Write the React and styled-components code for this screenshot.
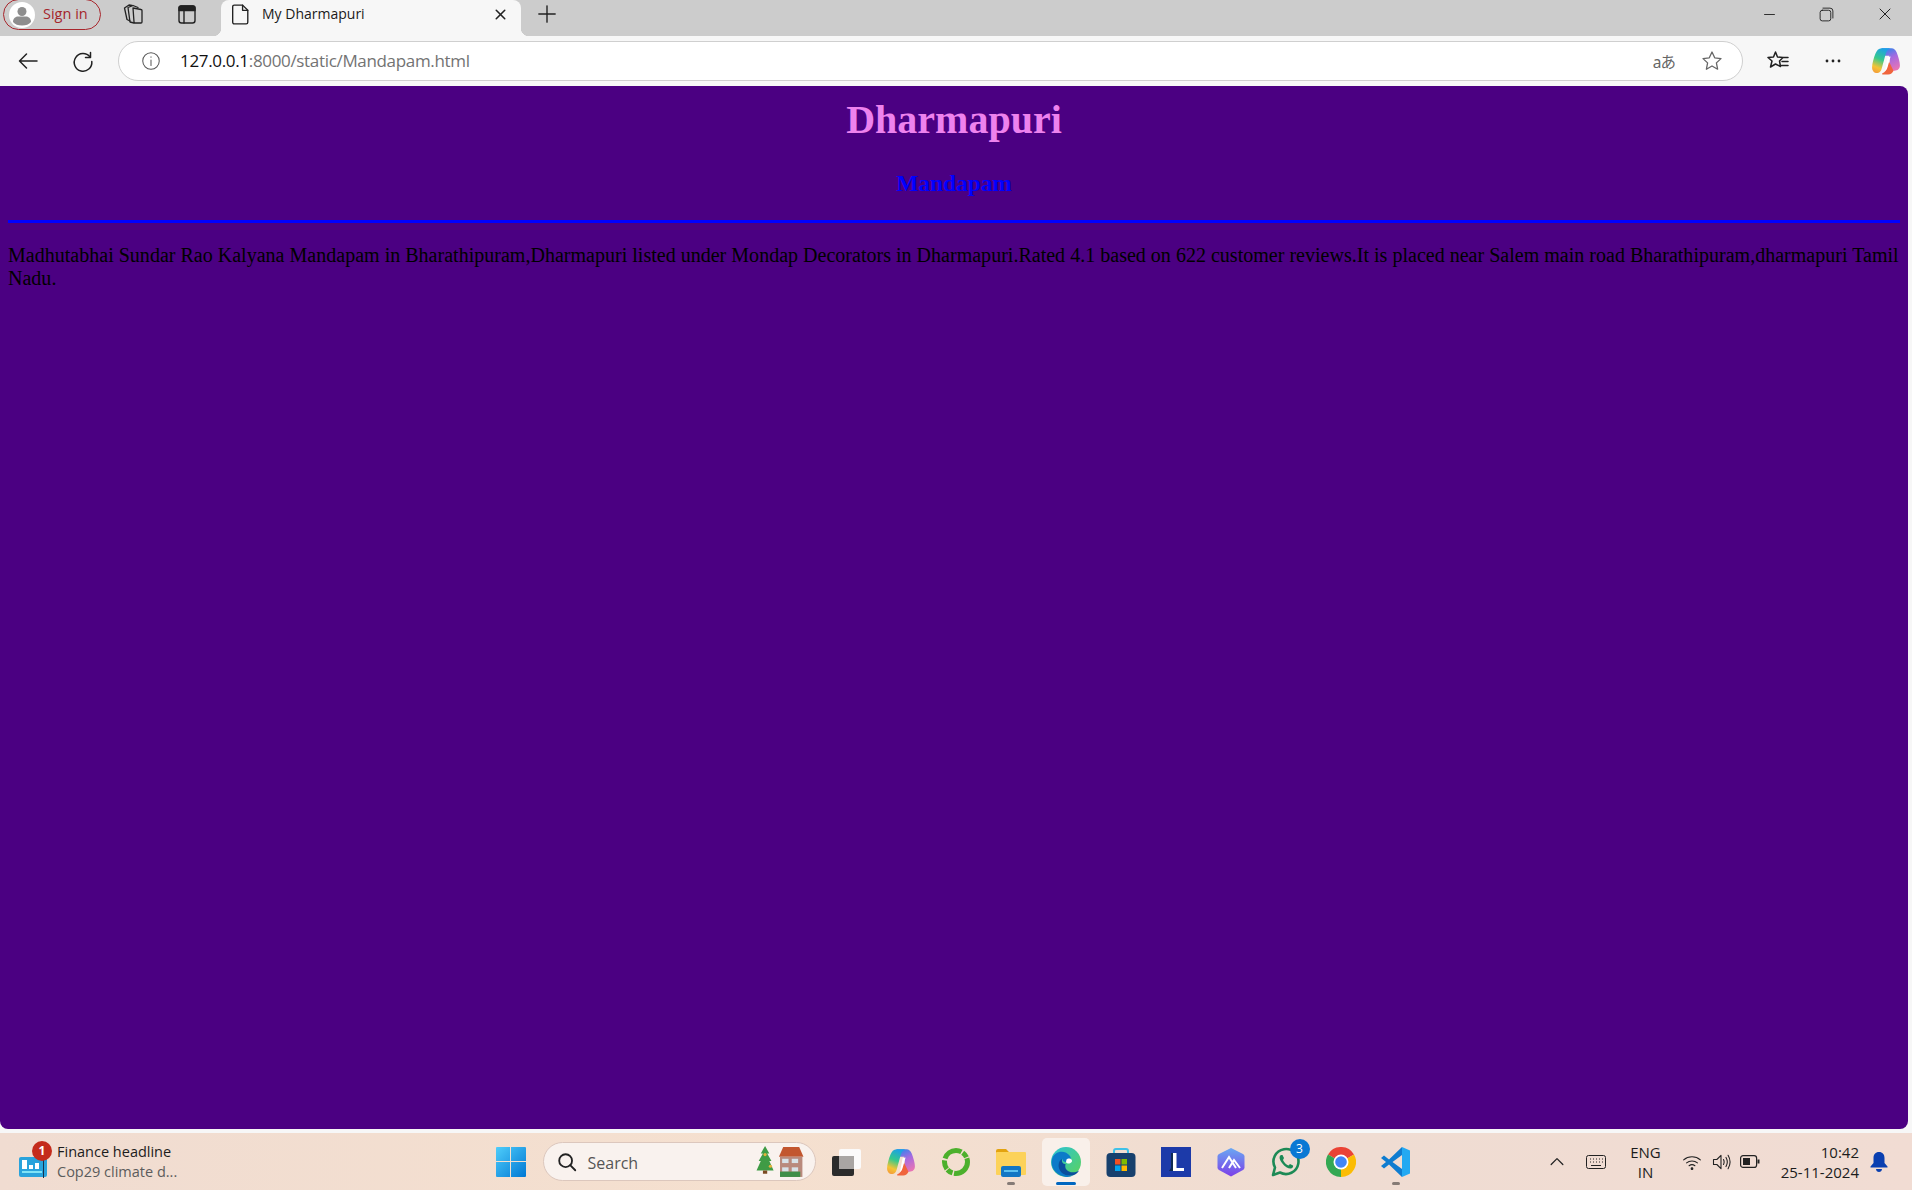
import styled, { createGlobalStyle } from 'styled-components';
import { FiX, FiPlus, FiMinus } from 'react-icons/fi';

const GlobalStyle = createGlobalStyle`
  html, body { margin: 0; padding: 0; height: 100%; overflow: hidden; }
  #root { height: 100%; }
  * { box-sizing: border-box; }
`;

const uiFont = `"Open Sans", "Noto Sans", "Liberation Sans", sans-serif`;

const Screen = styled.div`
  width: 1912px;
  height: 1190px;
  display: flex;
  flex-direction: column;
  background: #f7f7f7;
  font-family: ${uiFont};
  overflow: hidden;
`;

/* ---- tab strip ---- */
const TabStrip = styled.div`
  height: 36px;
  flex: none;
  display: flex;
  align-items: flex-start;
  background: #cccccc;
  padding-left: 3px;
`;
const SignIn = styled.div`
  width: 98px;
  height: 31px;
  margin-top: -1px;
  display: flex;
  align-items: center;
  gap: 8px;
  padding-left: 5px;
  border: 1px solid #a8262c;
  border-radius: 16px;
  color: #a4262c;
  font-size: 14.5px;
  span { margin-top: -2px; }
`;
const Avatar = styled.svg`
  width: 26px;
  height: 26px;
  flex: none;
`;
const StripButton = styled.div`
  width: 24px;
  height: 28px;
  display: flex;
  align-items: center;
  justify-content: center;
  margin-left: ${(p) => p.$left}px;
`;
const Tab = styled.div`
  width: 300px;
  height: 36px;
  margin-left: 22px;
  padding: 0 12px 8px 7px;
  display: flex;
  align-items: center;
  background: #f7f7f7;
  border-radius: 8px 8px 0 0;
  position: relative;
  color: #1a1a1a;
  font-size: 14px;
  &::after {
    content: '';
    position: absolute;
    right: -8px;
    bottom: 0;
    width: 8px;
    height: 8px;
    background: radial-gradient(circle at 100% 0, #cccccc 8px, #f7f7f7 8.5px);
  }
  &::before {
    content: '';
    position: absolute;
    left: -8px;
    bottom: 0;
    width: 8px;
    height: 8px;
    background: radial-gradient(circle at 0 0, #cccccc 8px, #f7f7f7 8.5px);
  }
`;
const TabTitle = styled.span`
  flex: 1;
  margin: -2px 0 0 9px;
`;
const NewTab = styled.div`
  height: 28px;
  margin-left: 12px;
  display: flex;
  align-items: center;
  color: #222;
`;
const WindowButtons = styled.div`
  height: 28px;
  margin-left: auto;
  margin-right: 17px;
  display: flex;
  align-items: center;
  gap: 40px;
  color: #222;
`;

/* ---- toolbar ---- */
const Toolbar = styled.div`
  height: 50px;
  flex: none;
  display: flex;
  align-items: center;
  padding-left: 16px;
`;
const NavButton = styled.div`
  width: 24px;
  display: flex;
  justify-content: center;
  margin-right: ${(p) => p.$right || 0}px;
`;
const AddressBar = styled.div`
  width: 1625px;
  height: 40px;
  display: flex;
  align-items: center;
  padding: 0 18px 0 21px;
  background: #fff;
  border: 1px solid #cfcfcf;
  border-radius: 20px;
  margin-right: 23px;
`;
const Url = styled.div`
  margin: -2px 0 0 18px;
  flex: 1;
  font-size: 17px;
  letter-spacing: -0.33px;
  color: #111;
  span { color: #737373; }
`;
const ToolIcons = styled.div`
  display: flex;
  align-items: center;
  gap: 25px;
`;
const TranslateGlyph = styled.span`
  font-family: "Noto Sans", "Noto Sans CJK JP", sans-serif;
  font-size: 15.5px;
  letter-spacing: -1px;
  color: #666;
`;
const EndIcons = styled.div`
  display: flex;
  align-items: center;
  gap: 31px;
`;
const ToolbarCopilot = styled.div`
  display: flex;
  margin-left: -5px;
`;

/* ---- web page ---- */
const Page = styled.main`
  width: 1908px;
  height: 1043px;
  flex: none;
  padding: 11px 8px 0;
  background: #4b0082;
  border-radius: 0 8px 8px 8px;
  font-family: "Liberation Serif", serif;
  color: #000;
`;
const Title = styled.h1`
  margin: 0;
  font-size: 40px;
  line-height: 46px;
  font-weight: 700;
  text-align: center;
  color: violet;
`;
const Subtitle = styled.h2`
  margin: 27px 0 0;
  font-size: 23.4px;
  line-height: 27px;
  font-weight: 700;
  text-align: center;
  color: #0000ff;
`;
const Rule = styled.hr`
  margin: 23px 0 0;
  border: 0;
  height: 3px;
  background: #0000ff;
`;
const Body = styled.p`
  margin: 21px 0 0;
  font-size: 20px;
  line-height: 23px;
  letter-spacing: 0.016px;
`;

/* ---- taskbar ---- */
const Taskbar = styled.footer`
  height: 57px;
  margin-top: 4px;
  flex: none;
  display: grid;
  grid-template-columns: 1fr auto 1fr;
  align-items: center;
  background: linear-gradient(90deg, #f0dcd1 0%, #f5e0cf 40%, #efdcd2 70%, #f1dcd3 100%);
  color: #1c1c1c;
`;
const Widget = styled.div`
  display: flex;
  align-items: center;
  padding-left: 19px;
  gap: 0;
`;
const WidgetIcon = styled.div`
  position: relative;
  width: 38px;
  height: 32px;
  flex: none;
`;
const RedBadge = styled.span`
  position: absolute;
  top: -5px;
  left: 13px;
  width: 20px;
  height: 20px;
  border-radius: 50%;
  background: #c42b1c;
  color: #fff;
  font-size: 12px;
  font-weight: 700;
  display: flex;
  align-items: center;
  justify-content: center;
`;
const WidgetText = styled.div`
  margin-top: 1px;
  font-size: 14.5px;
  line-height: 20px;
  small { display: block; font-size: 14.5px; color: #5c5c5c; }
`;
const Center = styled.div`
  display: flex;
  align-items: center;
  margin-left: -5px;
`;
const Slot = styled.div`
  position: relative;
  width: 55px;
  height: 48px;
  display: flex;
  align-items: center;
  justify-content: center;
  ${(p) => p.$active && `
    &::before {
      content: '';
      position: absolute;
      left: 3px; right: 4px; top: 0; bottom: 0;
      background: #f9f0ea;
      border-radius: 5px;
    }
  `}
  & > svg { position: relative; }
`;
const Dot = styled.span`
  position: absolute;
  bottom: 1px;
  left: 50%;
  transform: translateX(-50%);
  width: ${(p) => (p.$blue ? 20 : 8)}px;
  height: 3px;
  border-radius: 2px;
  background: ${(p) => (p.$blue ? '#0067c0' : '#857b76')};
`;
const BlueBadge = styled.span`
  position: absolute;
  top: 1px;
  right: 4px;
  width: 20px;
  height: 20px;
  border-radius: 50%;
  background: #0a78d4;
  color: #fff;
  font-size: 12px;
  display: flex;
  align-items: center;
  justify-content: center;
`;
const SearchBox = styled.div`
  width: 273px;
  height: 39px;
  margin: 0 3px 0 4px;
  display: flex;
  align-items: center;
  padding: 0 10px 0 12px;
  background: #f9f2ee;
  border: 1px solid #dcc7bd;
  border-radius: 20px;
  font-size: 16px;
  color: #555;
`;
const SearchLabel = styled.span`
  flex: 1;
  margin: 2px 0 0 10px;
`;
const Tray = styled.div`
  display: flex;
  align-items: center;
  justify-content: flex-end;
  padding-right: 24px;
  font-size: 15px;
`;
const Lang = styled.div`
  text-align: center;
  line-height: 20px;
  margin: 0 21px 0 24px;
`;
const TrayIcons = styled.div`
  display: flex;
  align-items: center;
  gap: 9px;
`;
const Clock = styled.div`
  text-align: right;
  line-height: 20px;
  margin: 0 11px 0 21px;
`;

/* ---- drawn icons ---- */
const Stroke = ({ size = 24, w = 1.6, color = '#222', children }) => (
  <svg width={size} height={size} viewBox="0 0 24 24" fill="none" stroke={color} strokeWidth={w} strokeLinecap="round" strokeLinejoin="round">
    {children}
  </svg>
);

const CopilotIcon = ({ size = 28, id = 'a' }) => (
  <svg width={size} height={size} viewBox="0 0 28 28">
    <defs>
      <linearGradient id={`cpL${id}`} x1="0.6" y1="0" x2="0.3" y2="1">
        <stop offset="0" stopColor="#1c9fe8" />
        <stop offset="0.45" stopColor="#35c98c" />
        <stop offset="0.8" stopColor="#f6c333" />
        <stop offset="1" stopColor="#f3a13a" />
      </linearGradient>
      <linearGradient id={`cpR${id}`} x1="0.3" y1="0" x2="0.7" y2="1">
        <stop offset="0" stopColor="#2f86ec" />
        <stop offset="0.45" stopColor="#a66ae0" />
        <stop offset="1" stopColor="#e874b4" />
      </linearGradient>
    </defs>
    <path d="M10 2h9c2.500 0 4 1.500 5 4 1.500 4 3 9 3 12 0 3.500-2.200 5-5 5h-4L17 9H9z" fill={`url(#cpR${id})`} />
    <path d="M10 2h8c-2.500 1-3.600 3-4.300 5.500L10 21c-.6 2.200-1.700 3.800-3.700 4.200C3 25.500 1 23 1 20c0-3.500 1.500-8.500 3-12.500C5.300 4 7 2 10 2z" fill={`url(#cpL${id})`} />
    <path d="M10.500 25.500c2.500-.7 3.500-2.700 4.100-4.700L16.500 14l4.500 9c-1 2-2.500 3.500-5 3.500h-5.500z" fill="#f0643c" />
    <path d="M15.500 10.500l2.800-.8-2.800 10c-.5 1.800-1.200 3-2.500 3.800z" fill="#fff" />
  </svg>
);

const WindowsIcon = () => (
  <svg width="30" height="30" viewBox="0 0 30 30">
    <defs>
      <linearGradient id="winA" x1="0" y1="0" x2="1" y2="1">
        <stop offset="0" stopColor="#4fcdfa" />
        <stop offset="1" stopColor="#0078d4" />
      </linearGradient>
    </defs>
    <path d="M0 1a1 1 0 0 1 1-1h13v14H0zM15 0h14a1 1 0 0 1 1 1v13H15zM0 15h14v15H1a1 1 0 0 1-1-1zM15 15h15v14a1 1 0 0 1-1 1H15z" fill="url(#winA)" />
  </svg>
);

const EdgeIcon = () => (
  <svg width="30" height="30" viewBox="0 0 30 30">
    <defs>
      <linearGradient id="edA" x1="0" y1="0" x2="1" y2="1">
        <stop offset="0" stopColor="#2bc3d8" />
        <stop offset="1" stopColor="#5cd35a" />
      </linearGradient>
    </defs>
    <circle cx="15" cy="15" r="15" fill="url(#edA)" />
    <path d="M1 12C3 4 14 2 19 9c2 3 0 6-4 6 -2 0-4-1-3-3-4 2-5 9 1 14 3 2.500 7 3 10 2-3 1.800-6 2.200-9 1.700C5 28 -1 21 1 12z" fill="#0c7bc9" />
    <path d="M11 12c-4 2-5 9 0 14 3 2.500 8 3 12 2 2-1 4-2.500 5-4.500-3 2-7 2.500-10 1-4-2-4-5-3.500-7.500-2 0-4-1-3.500-5z" fill="#0b4f9c" />
    <path d="M15.500 12.500c1-1.500 4-1.500 5 0s.5 2.500-1 3.500c-2 1-4 .5-4.500-1z" fill="#fff" />
  </svg>
);

const StoreIcon = () => (
  <svg width="30" height="30" viewBox="0 0 30 30">
    <path d="M8 8V4a2 2 0 0 1 2-2h10a2 2 0 0 1 2 2v4" fill="none" stroke="#3fc1e8" strokeWidth="2" />
    <rect x="0.500" y="6" width="29" height="24" rx="4" fill="#17406d" />
    <rect x="9" y="12" width="5.500" height="5.500" fill="#f25022" />
    <rect x="15.500" y="12" width="5.500" height="5.500" fill="#7fba00" />
    <rect x="9" y="18.500" width="5.500" height="5.500" fill="#00a4ef" />
    <rect x="15.500" y="18.500" width="5.500" height="5.500" fill="#ffb900" />
  </svg>
);

const LIcon = () => (
  <svg width="30" height="30" viewBox="0 0 30 30">
    <rect width="30" height="30" fill="#1c3aa9" />
    <path d="M10 6h4v15h8v3H8l2-3z" fill="#0d2a52" />
    <path d="M12 6h3.500v15H23v3H12z" fill="#fff" />
  </svg>
);

const ArcIcon = () => (
  <svg width="30" height="30" viewBox="0 0 30 30">
    <defs>
      <linearGradient id="arA" x1="0" y1="0" x2="0" y2="1">
        <stop offset="0" stopColor="#6aa8f2" />
        <stop offset="1" stopColor="#7c3fe8" />
      </linearGradient>
    </defs>
    <path d="M15 1l12 6a3 3 0 0 1 1.500 2.500v11A3 3 0 0 1 27 23l-12 6.500L3 23a3 3 0 0 1-1.500-2.500v-11A3 3 0 0 1 3 7z" fill="url(#arA)" />
    <path d="M6 21l7-11 7 11M13 21l5-8 6 8" fill="none" stroke="#fff" strokeWidth="2" />
  </svg>
);

const WhatsAppIcon = () => (
  <svg width="30" height="30" viewBox="0 0 30 30">
    <path d="M2 28l2-7.500A12.500 12.500 0 1 1 9 25.500z" fill="none" stroke="#1d8a56" strokeWidth="2.600" strokeLinejoin="round" />
    <path d="M10 8c-2 1-2 4 1 8s7 6 9 5.500 2.500-2.500 2-3l-3-1.500-1.500 1.500c-2-.5-4.500-3-5.500-5.500L13 11l-1.500-3z" fill="#1d8a56" />
  </svg>
);

const ChromeIcon = () => (
  <svg width="30" height="30" viewBox="0 0 30 30">
    <path d="M15 15L2 7.500A15 15 0 0 1 28 7.500z" fill="#ea4335" />
    <path d="M15 15L28 7.500A15 15 0 0 1 15 30z" fill="#fbbc04" />
    <path d="M15 15L15 30A15 15 0 0 1 2 7.500z" fill="#34a853" />
    <circle cx="15" cy="15" r="7.500" fill="#fff" />
    <circle cx="15" cy="15" r="5.800" fill="#4285f4" />
  </svg>
);

const VsCodeIcon = () => (
  <svg width="30" height="30" viewBox="0 0 30 30">
    <path d="M21 0l8 3.500v23L21 30z" fill="#23a9f2" />
    <path d="M21 0L8 12.500 3 8.500 0 11l5 4-5 4 3 2.500 5-4L21 30v-8l-9.500-7L21 8z" fill="#0e7cd0" />
  </svg>
);

const FolderIcon = () => (
  <svg width="30" height="30" viewBox="0 0 30 30">
    <path d="M0 4a2 2 0 0 1 2-2h8l3 3h15v4H0z" fill="#e3a30f" />
    <rect y="5" width="30" height="23" rx="1" fill="#fcd25a" />
    <rect x="5" y="19" width="20" height="11" rx="2" fill="#1276c4" />
    <rect x="8" y="23" width="14" height="2" fill="#5cc0f0" />
  </svg>
);

const RingIcon = () => (
  <svg width="30" height="30" viewBox="0 0 30 30">
    <circle cx="15" cy="15" r="11.500" fill="none" stroke="#4cb02c" strokeWidth="5" strokeDasharray="20 1.500 6 1 9 2" />
  </svg>
);

const TaskViewIcon = () => (
  <svg width="30" height="30" viewBox="0 0 30 30">
    <rect x="8" y="2" width="22" height="20" rx="2" fill="#fbfafa" />
    <rect x="1" y="9" width="22" height="20" rx="2" fill="#2b2b2b" />
    <rect x="8" y="9" width="15" height="13" fill="#a9a5a3" />
  </svg>
);

const SceneryIcon = () => (
  <svg width="50" height="32" viewBox="0 0 46 30">
    <path d="M9 0l4 7h-2l4 7h-2l4 9H1l4-9H3l4-7H5z" fill="#3f9b45" />
    <rect x="7" y="23" width="4" height="3" fill="#7b4a21" />
    <circle cx="9" cy="8" r="1.500" fill="#e5b23a" />
    <circle cx="14" cy="19" r="1.500" fill="#e5b23a" />
    <path d="M22 10l4-9h15l4 9z" fill="#c2562f" />
    <rect x="23" y="10" width="21" height="19" fill="#b98a7d" />
    <rect x="25" y="12" width="6" height="4" fill="#d8e2e8" />
    <rect x="34" y="12" width="6" height="4" fill="#d8e2e8" />
    <rect x="25" y="20" width="6" height="4" fill="#d8e2e8" />
    <rect x="34" y="20" width="6" height="4" fill="#d8e2e8" />
    <rect x="23" y="24" width="19" height="5" fill="#3f8f48" />
  </svg>
);

const App = () => (
  <Screen>
    <GlobalStyle />
    <TabStrip>
      <SignIn>
        <Avatar viewBox="0 0 26 26">
          <circle cx="13" cy="13" r="13" fill="#fff" />
          <circle cx="13" cy="9.500" r="4.500" fill="#8e8e8e" />
          <path d="M4 20c0-4 3-5.500 5-5.500h8c2 0 5 1.500 5 5.500-2 2.500-5 3.500-9 3.500s-7-1-9-3.500z" fill="#8e8e8e" />
        </Avatar>
        <span>Sign in</span>
      </SignIn>
      <StripButton $left={21}>
        <Stroke size={26} w={1.300}>
          <path d="M11 6l8 1.500a1 1 0 0 1 1 1V20a1 1 0 0 1-1 1h-6a1 1 0 0 1-1-1z" />
          <path d="M12 21L8 20 6 5.500 11 3.500l5 2" />
          <path d="M8 19l-3-1.500L2.500 6 7 3l3 .5" />
        </Stroke>
      </StripButton>
      <StripButton $left={29}>
        <Stroke size={25} w={1.400}>
          <rect x="4" y="3.500" width="16" height="17" rx="2.500" />
          <path d="M4 5.500a2 2 0 0 1 2-2h12a2 2 0 0 1 2 2v2.500H4z" fill="#222" />
          <path d="M9 8v12.500" />
        </Stroke>
      </StripButton>
      <Tab>
        <Stroke size={25} w={1.300}>
          <path d="M6 3h8l5 5v11.500a1.500 1.500 0 0 1-1.500 1.500h-11.500A1.500 1.500 0 0 1 4.500 19.500V4.500A1.500 1.500 0 0 1 6 3z" />
          <path d="M14 3v5h5" />
        </Stroke>
        <TabTitle>My Dharmapuri</TabTitle>
        <FiX size={17} strokeWidth={2.200} color="#222" />
      </Tab>
      <NewTab>
        <FiPlus size={28} strokeWidth={1.200} />
      </NewTab>
      <WindowButtons>
        <FiMinus size={17} strokeWidth={1.300} />
        <Stroke size={17} w={1.300}>
          <rect x="3" y="6" width="15" height="15" rx="3" />
          <path d="M7 3h10a4 4 0 0 1 4 4v10" />
        </Stroke>
        <FiX size={20} strokeWidth={1.200} />
      </WindowButtons>
    </TabStrip>
    <Toolbar>
      <NavButton $right={31}>
        <Stroke size={26} w={1.500}>
          <path d="M21 12H3.500M10.500 5l-7 7 7 7" />
        </Stroke>
      </NavButton>
      <NavButton $right={23}>
        <Stroke size={25} w={1.500}>
          <path d="M19 7.500A8.800 8.800 0 1 0 20.800 12" />
          <path d="M19.500 3v5h-5" />
        </Stroke>
      </NavButton>
      <AddressBar>
        <Stroke size={22} w={1.100} color="#555">
          <circle cx="12" cy="12" r="9" />
          <path d="M12 11v6M12 7.500v.5" />
        </Stroke>
        <Url>127.0.0.1<span>:8000/static/Mandapam.html</span></Url>
        <ToolIcons>
          <TranslateGlyph>aあ</TranslateGlyph>
          <Stroke size={24} w={1.300} color="#666">
            <path d="M12 3l2.700 5.800 6.300.8-4.600 4.300 1.200 6.300L12 17l-5.600 3.200 1.200-6.300L3 9.600l6.300-.8z" />
          </Stroke>
        </ToolIcons>
      </AddressBar>
      <EndIcons>
        <Stroke size={24} w={1.500}>
          <path d="M9.500 3l2 5 5.500.5-3.500 3.500 1 5.500-5-2.500-5 3L6 12 2 8.500 7.500 8z" />
          <path d="M17.500 8.500H22M16 12.500h6M15.500 16.500H22" />
        </Stroke>
        <Stroke size={24} w={0}>
          <circle cx="6" cy="12" r="1.400" fill="#222" />
          <circle cx="12" cy="12" r="1.400" fill="#222" />
          <circle cx="18" cy="12" r="1.400" fill="#222" />
        </Stroke>
        <ToolbarCopilot>
          <CopilotIcon size={30} id="top" />
        </ToolbarCopilot>
      </EndIcons>
    </Toolbar>
    <Page>
      <Title>Dharmapuri</Title>
      <Subtitle>Mandapam</Subtitle>
      <Rule />
      <Body>
        Madhutabhai Sundar Rao Kalyana Mandapam in Bharathipuram,Dharmapuri listed under Mondap Decorators in Dharmapuri.Rated 4.1 based on 622 customer reviews.It is placed near Salem main road Bharathipuram,dharmapuri Tamil Nadu.
      </Body>
    </Page>
    <Taskbar>
      <Widget>
        <WidgetIcon>
          <svg width="28" height="21" viewBox="0 0 28 21" style={{ marginTop: 11 }}>
            <rect width="28" height="20" rx="2" fill="#29a3dc" />
            <rect x="3" y="3" width="5" height="9" fill="#fff" />
            <rect x="10" y="8" width="4" height="4" fill="#fff" />
            <rect x="16" y="6" width="4" height="6" fill="#fff" />
            <rect x="3" y="14" width="20" height="2" fill="#7fe3f7" />
            <rect x="24" y="3" width="1" height="18" fill="#17324d" />
          </svg>
          <RedBadge>1</RedBadge>
        </WidgetIcon>
        <WidgetText>
          Finance headline
          <small>Cop29 climate d...</small>
        </WidgetText>
      </Widget>
      <Center>
        <Slot><WindowsIcon /></Slot>
        <SearchBox>
          <Stroke size={22} w={2}>
            <circle cx="10.500" cy="10.500" r="7" />
            <path d="M15.500 15.500L21 21" />
          </Stroke>
          <SearchLabel>Search</SearchLabel>
          <SceneryIcon />
        </SearchBox>
        <Slot><TaskViewIcon /></Slot>
        <Slot><CopilotIcon size={30} id="bar" /></Slot>
        <Slot><RingIcon /></Slot>
        <Slot><FolderIcon /><Dot /></Slot>
        <Slot $active><EdgeIcon /><Dot $blue /></Slot>
        <Slot><StoreIcon /></Slot>
        <Slot><LIcon /></Slot>
        <Slot><ArcIcon /></Slot>
        <Slot><WhatsAppIcon /><BlueBadge>3</BlueBadge></Slot>
        <Slot><ChromeIcon /></Slot>
        <Slot><VsCodeIcon /><Dot /></Slot>
      </Center>
      <Tray>
        <Stroke size={20} w={1.500}>
          <path d="M5 15l7-7 7 7" />
        </Stroke>
        <svg width="20" height="14" viewBox="0 0 20 14" fill="none" stroke="#222" strokeWidth="1" style={{ marginLeft: 19 }}>
          <rect x="0.500" y="0.500" width="19" height="13" rx="2" />
          <path d="M4 4h1M7 4h1M10 4h1M13 4h1M16 4h1M4 7h1M7 7h1M10 7h1M13 7h1M16 7h1M5 10.500h10" />
        </svg>
        <Lang>ENG<br />IN</Lang>
        <TrayIcons>
          <Stroke size={20} w={1.300}>
            <path d="M2 9.500c5.500-5 14.500-5 20 0M5.500 13c3.500-3 9.500-3 13 0M8.500 16.500c2-1.500 5-1.500 7 0" />
            <circle cx="12" cy="20" r="1" fill="#222" />
          </Stroke>
          <Stroke size={20} w={1.300}>
            <path d="M3 9h4l5-5v16l-5-5H3z" />
            <path d="M15 9c1 2 1 4 0 6M18 6.500c2 3.500 2 7.500 0 11M20.500 4c3 5 3 11 0 16" />
          </Stroke>
          <svg width="20" height="13" viewBox="0 0 20 13" fill="none" stroke="#222" strokeWidth="1.200">
            <rect x="0.600" y="0.600" width="16" height="11.800" rx="2.500" />
            <rect x="3" y="3" width="7" height="7" fill="#222" stroke="none" />
            <path d="M18.500 4.500v4" strokeWidth="2" />
          </svg>
        </TrayIcons>
        <Clock>10:42<br />25-11-2024</Clock>
        <svg width="18" height="20" viewBox="0 0 18 20">
          <path d="M9 0c3.500 0 5.500 2.500 5.500 6v5l3 3.500v1H.5v-1l3-3.500V6C3.500 2.500 5.500 0 9 0zM6 17h6c0 2-1.500 3-3 3s-3-1-3-3z" fill="#0a3fb0" />
        </svg>
      </Tray>
    </Taskbar>
  </Screen>
);

export default App;
